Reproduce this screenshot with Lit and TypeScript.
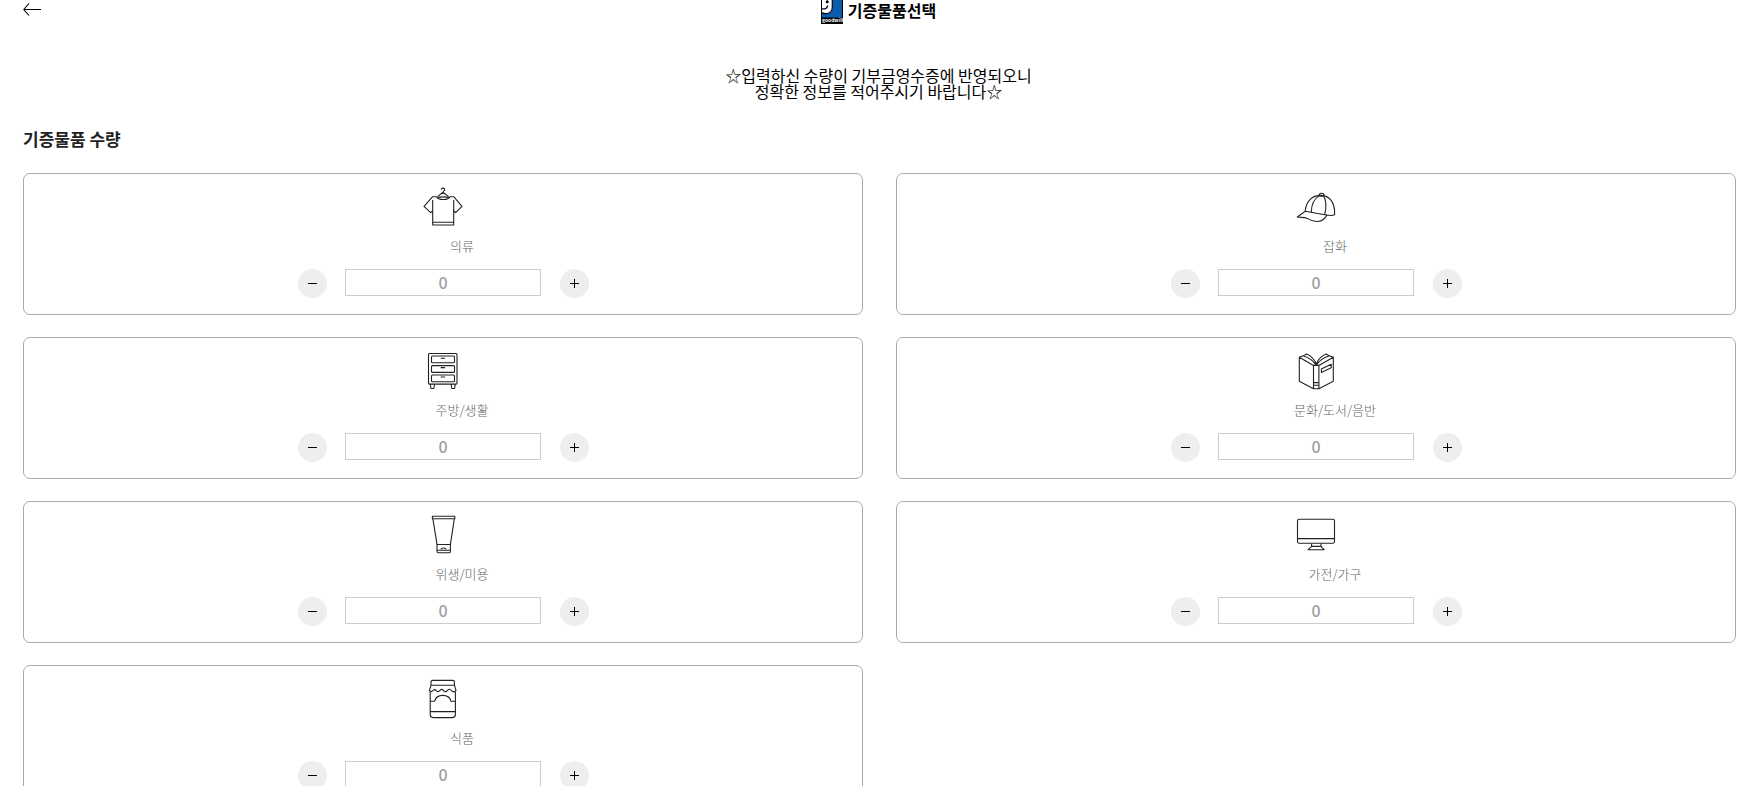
import { LitElement, html, svg, css, SVGTemplateResult } from "lit";
import { customElement, property, state } from "lit/decorators.js";

interface Item {
  id: string;
  name: string;
  icon: SVGTemplateResult;
}

const ITEMS: Item[] = [
  {
    id: "clothes",
    name: "의류",
    icon: svg`
      <path d="M18.3 2.6C18.4 .6 21.8 .6 21.7 2.6C21.6 3.8 20 3.9 20 5.4M20 5.2L14.6 9.6M20 5.2L25.6 9.6"/>
      <path d="M9.7 9.7H13.5C15 13.4 25.4 13.4 27 9.7H30.7L39 19.3L32.6 25.7L30.7 23.6V38H9.7V23.6L7.7 25.7L1 19.3ZM9.7 13V24M30.7 13V24M9.7 35.2H30.7"/>
      <path d="M14.4 10.8C17 9.6 23.6 9.6 26.2 10.8"/>`,
  },
  {
    id: "goods",
    name: "잡화",
    icon: svg`
      <path d="M9.3 24.3C9.6 15 15.5 8.8 24 8.4C33 8 39.2 15 38.6 27.4C37.4 28.8 32 28.3 29 27.7L9.3 24.3L1.3 30C4 30.8 8 29.9 11.2 31.4C17.6 35.4 27 36.6 30.8 28"/>
      <path d="M15.3 25C15.4 18 18 11.8 23.8 8.4M26.8 8.4C30.5 12.5 30.6 21 28.7 27.6"/>
      <path d="M23 8.4C23.2 5.6 28 5.6 28.1 8.6C26.4 9.4 24.4 9.2 23 8.4Z"/>`,
  },
  {
    id: "living",
    name: "주방/생활",
    icon: svg`
      <rect x="5.5" y="2.5" width="28.5" height="30.6" rx="1"/>
      <rect x="8.5" y="5" width="23" height="6.8" rx="1"/>
      <rect x="8.5" y="14.6" width="23" height="6.8" rx="1"/>
      <rect x="8.5" y="24" width="23" height="6.8" rx="1"/>
      <path d="M17.7 7.2H22M17.7 16.6H22M17.7 26H22M7.2 33L8 37.5H10.8L11.6 33M28 33L28.8 37.5H31.6L32.3 33"/>`,
  },
  {
    id: "culture",
    name: "문화/도서/음반",
    icon: svg`
      <path d="M3.3 6.3V30.2L17.5 37.7V14.4ZM37.3 6.3V30.2L22.9 37.7V14.4ZM17.5 14.4H22.9V37.7H17.5ZM17.5 31.6H22.9M17.5 34.2H22.9"/>
      <path d="M3.3 6.3L7 4.7C12 6.2 17.2 9.4 20.2 14.2C23.4 9.4 28.4 6.2 33.6 4.7L37.3 6.3M7.4 4.9L10.4 3C14.6 4.6 18.4 8 20.2 13C22.2 8 26 4.6 30.2 3L33.2 4.9"/>
      <path d="M25.4 17.9L35.2 13.2V16.8L25.4 21.6Z"/>`,
  },
  {
    id: "beauty",
    name: "위생/미용",
    icon: svg`
      <path d="M9.4 1.3H31.8V3.8H9.4ZM9.9 3.8L14 29.4V36.6Q14 37.7 15.2 37.7H26.2Q27.4 37.7 27.4 36.6V29.4L31.3 3.8M14 29.5H27.4M14 35.2H27.4"/>
      <path d="M17.8 34.4C18.2 32.6 22.8 32.6 23.2 34.4"/>`,
  },
  {
    id: "appliance",
    name: "가전/가구",
    icon: svg`
      <rect x="1.5" y="4.3" width="37" height="24" rx="1.8"/>
      <path d="M1.5 23.6H38.5M15.6 28.4V31.4H25V28.4M15.6 31.4L12 34.8H28.2L25 31.4"/>`,
  },
  {
    id: "food",
    name: "식품",
    icon: svg`
      <path d="M8 6.2V3Q8 1.4 9.6 1.4H29.8Q31.4 1.4 31.4 3V6.2ZM8 6.2L6.4 11.4C8 13.4 9.6 12.6 10.8 10.8C12.6 9.6 13.6 13 15.4 12.6C17 12.2 17.6 9.6 19.6 10.6C21.4 12.8 22.4 13.4 24 12C25.6 9.6 27 9.8 28.4 11.6C30 13.2 31.6 13.4 33 11.4L31.4 6.2"/>
      <path d="M7.2 12.6V35.6Q7.2 38.6 10.2 38.6H29.4Q32.4 38.6 32.4 35.6V12.6M7.2 22.3H11.6C13.6 14.4 26 14.4 28 22.3H32.4M7.2 32.6H32.4"/>`,
  },
];

@customElement("donation-item")
export class DonationItem extends LitElement {
  @property({ attribute: false }) item!: Item;
  @state() private count = 0;

  static styles = css`
    :host {
      display: flex;
      flex-direction: column;
      align-items: center;
      padding: 13px 16px 16px;
      border: 1px solid #aaa;
      border-radius: 7px;
    }
    .icon {
      width: 40px;
      height: 40px;
      fill: none;
      stroke: #222;
      stroke-width: 1.1;
      stroke-linejoin: round;
    }
    .name {
      margin: 9px 0 13px;
      padding-left: 38px;
      font-size: 13px;
      line-height: 20px;
      font-weight: 300;
      color: #666;
    }
    .stepper {
      display: flex;
      justify-content: space-between;
      width: 291px;
      max-width: 100%;
    }
    .step {
      display: grid;
      place-items: center;
      width: 29px;
      height: 29px;
      padding: 0;
      border: 0;
      border-radius: 50%;
      background: #eee;
      cursor: pointer;
    }
    .sign {
      width: 9px;
      height: 9px;
      stroke: #000;
      stroke-width: 1;
    }
    .count {
      box-sizing: border-box;
      width: 196px;
      height: 27px;
      padding: 0 0 1px;
      border: 1px solid #ccc;
      border-radius: 0;
      background: #fff;
      color: #a0a0a0;
      font: inherit;
      font-size: 16px;
      font-weight: 500;
      text-align: center;
    }
  `;

  private change(delta: number) {
    this.count = Math.max(0, this.count + delta);
  }

  private typed(e: Event) {
    this.count = Math.max(0, parseInt((e.target as HTMLInputElement).value, 10) || 0);
  }

  render() {
    const { id, name, icon } = this.item;
    return html`
      <svg class="icon" viewBox="0 0 40 40" aria-hidden="true">${icon}</svg>
      <label class="name" for=${id}>${name}</label>
      <div class="stepper">
        <button class="step" type="button" aria-label="빼기" @click=${() => this.change(-1)}>
          <svg class="sign" viewBox="0 0 9 9"><path d="M0 4.5H9" /></svg>
        </button>
        <input
          class="count"
          id=${id}
          type="text"
          inputmode="numeric"
          .value=${String(this.count)}
          @change=${this.typed}
        />
        <button class="step" type="button" aria-label="더하기" @click=${() => this.change(1)}>
          <svg class="sign" viewBox="0 0 9 9"><path d="M0 4.5H9M4.5 0V9" /></svg>
        </button>
      </div>
    `;
  }
}

@customElement("app-root")
export class AppRoot extends LitElement {
  static styles = css`
    :host {
      display: block;
      padding: 0 11px 22px 23px;
      background: #fff;
      color: #000;
      font-family: "Noto Sans CJK KR", "Noto Sans", sans-serif;
      font-size: 16px;
    }
    .bar {
      display: grid;
      grid-template-columns: 1fr auto 1fr;
      align-items: start;
    }
    .back {
      display: block;
      width: 18px;
      padding-top: 3px;
    }
    .arrow {
      display: block;
      width: 18px;
      height: 13px;
      fill: none;
      stroke: #000;
      stroke-width: 1.1;
    }
    .brand {
      display: flex;
      gap: 5px;
      padding-right: 2px;
    }
    .logo {
      width: 22px;
      height: 24px;
    }
    .logo-text {
      font-size: 5px;
      font-weight: 700;
      fill: #fff;
    }
    .title {
      margin: 0;
      font-size: 16px;
      line-height: 20px;
      font-weight: 700;
    }
    .notice {
      margin: 43px 0 0;
      padding-right: 2px;
      line-height: 16px;
      text-align: center;
    }
    .heading {
      margin: 28px 0 22px;
      font-size: 17px;
      line-height: 24px;
      font-weight: 700;
      color: #222;
    }
    .items {
      display: grid;
      grid-template-columns: 1fr 1fr;
      gap: 22px 33px;
    }
  `;

  render() {
    return html`
      <header class="bar">
        <a class="back" href="#" aria-label="뒤로">
          <svg class="arrow" viewBox="0 0 18 13"><path d="M6 .5L.8 6.5L6 12.5M.8 6.5H18" /></svg>
        </a>
        <div class="brand">
          <svg class="logo" viewBox="0 0 22 24" aria-hidden="true">
            <path fill="#0b5cad" d="M0 0H22V24H0Z" />
            <path fill="#fff" d="M1 0H11.5V7C11.5 11.6 8.5 14.2 4 13.8L1 13Z" />
            <path fill="none" stroke="#000" stroke-width="1.2" d="M11.3 0V7C11.3 11.6 8.5 14 4 13.6L1 12.8M1 8.8C4 9.4 6.4 8.4 6.6 5.4" />
            <circle cx="6.2" cy="1.8" r="1.5" />
            <path d="M0 0H1V24H0ZM21 0H22V24H21ZM0 17.5H22V24H0Z" />
            <text class="logo-text" x="1" y="22">goodwill</text>
          </svg>
          <h1 class="title">기증물품선택</h1>
        </div>
      </header>
      <main>
        <p class="notice">☆입력하신 수량이 기부금영수증에 반영되오니<br />정확한 정보를 적어주시기 바랍니다☆</p>
        <h2 class="heading">기증물품 수량</h2>
        <div class="items">
          ${ITEMS.map((item) => html`<donation-item .item=${item}></donation-item>`)}
        </div>
      </main>
    `;
  }
}
